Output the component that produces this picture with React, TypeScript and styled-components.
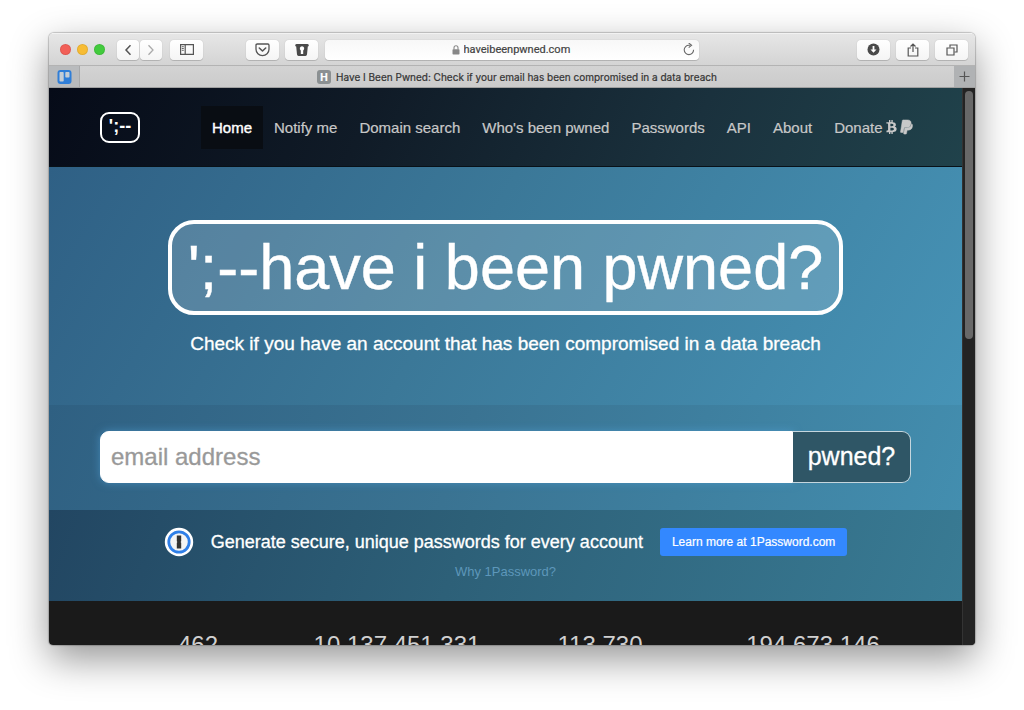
import React from 'react';
import styled, { createGlobalStyle } from 'styled-components';
import { FaBtc, FaPaypal } from 'react-icons/fa';

const sans = `"Liberation Sans", Arial, sans-serif`;

const GlobalStyle = createGlobalStyle`
  *, *::before, *::after { box-sizing: border-box; }
  body { margin: 0; background: #fff; font-family: ${sans}; }
  button, input { font: inherit; margin: 0; }
  a { text-decoration: none; color: inherit; }
`;

const Desktop = styled.div`
  display: flex;
  flex-direction: column;
  height: 100vh;
  padding: 33px 49px 65px;
  overflow: hidden;
`;

const BrowserWindow = styled.div`
  flex: 1;
  min-height: 0;
  display: flex;
  flex-direction: column;
  overflow: hidden;
  border-radius: 5px 5px 4px 4px;
  box-shadow: 0 0 1px 1px rgba(0, 0, 0, 0.2), 0 14px 38px rgba(0, 0, 0, 0.42);
`;

const Toolbar = styled.div`
  display: grid;
  grid-template-columns: 1fr 374px 1fr;
  align-items: center;
  height: 33px;
  flex: none;
  background: linear-gradient(#e6e6e6, #d4d4d4);
  border-top: 1px solid #f2f2f2;
  border-bottom: 1px solid #b3b3b3;
`;

const ToolGroup = styled.div<{ $end?: boolean }>`
  display: flex;
  align-items: center;
  gap: 6px;
  padding: 0 7px;
  justify-content: ${(p) => (p.$end ? 'flex-end' : 'flex-start')};
`;

const Lights = styled.div`
  display: flex;
  gap: 6px;
  margin: 0 6px 0 4px;
`;

const Light = styled.button<{ $color: string }>`
  width: 11px;
  height: 11px;
  padding: 0;
  border: 1px solid rgba(0, 0, 0, 0.08);
  border-radius: 50%;
  background: ${(p) => p.$color};
`;

const NavPair = styled.div`
  display: flex;
  gap: 1px;
  margin-right: 2px;
`;

const ToolButton = styled.button<{ $narrow?: boolean }>`
  display: flex;
  align-items: center;
  justify-content: center;
  width: ${(p) => (p.$narrow ? 22 : 33)}px;
  height: 20px;
  padding: 0;
  border: 0;
  border-radius: 4px;
  background: linear-gradient(#fff, #f5f5f5);
  box-shadow: 0 0 1px rgba(0, 0, 0, 0.25), 0 1px 0 rgba(0, 0, 0, 0.14);
`;

const Spacer = styled.div`
  flex: 1;
`;

const AddressBar = styled.form`
  display: flex;
  align-items: center;
  justify-content: center;
  gap: 3px;
  height: 20px;
  padding: 0 2px 0 18px;
  border-radius: 4px;
  background: linear-gradient(#f8f8f8, #fff);
  box-shadow: 0 0 1px rgba(0, 0, 0, 0.25), 0 1px 0 rgba(0, 0, 0, 0.14);
`;

const AddressCenter = styled.div`
  flex: 1;
  display: flex;
  align-items: center;
  justify-content: center;
  gap: 4px;
`;

const AddressInput = styled.input`
  width: 108px;
  padding: 0;
  border: 0;
  outline: 0;
  background: none;
  color: #444;
  font-family: Roboto, sans-serif;
  font-size: 11px;
  line-height: 16px;
  -webkit-text-stroke: 0.2px #444;
`;

const Reload = styled.button`
  display: flex;
  width: 14px;
  padding: 0;
  border: 0;
  background: none;
`;

const TabBar = styled.div`
  display: flex;
  flex: none;
  height: 22px;
  background: #b9bbbd;
  border-bottom: 1px solid #a0a0a0;
`;

const PinnedTab = styled.button`
  display: flex;
  align-items: center;
  justify-content: center;
  width: 31px;
  padding: 0;
  border: 0;
  border-right: 1px solid #a8a9aa;
  background: #b9bbbd;
`;

const ActiveTab = styled.div`
  flex: 1;
  display: flex;
  align-items: center;
  justify-content: center;
  gap: 5px;
  background: linear-gradient(#d3d3d3, #cbcbcb);
  color: #333;
  font-family: Inter, sans-serif;
  font-size: 10px;
  white-space: nowrap;
  -webkit-text-stroke: 0.2px;
`;

const Favicon = styled.span`
  display: flex;
  align-items: center;
  justify-content: center;
  width: 14px;
  height: 14px;
  border-radius: 3px;
  background: #8b9092;
  color: #fff;
  font-weight: 700;
`;

const NewTab = styled.button`
  display: flex;
  align-items: center;
  justify-content: center;
  width: 21px;
  padding: 0;
  border: 0;
  background: #b0b2b4;
`;

const Viewport = styled.div`
  flex: 1;
  min-height: 0;
  display: flex;
  background: #1a1a1a;
`;

const Page = styled.div`
  flex: 1;
  min-width: 0;
  overflow: hidden;
`;

const ScrollTrack = styled.div`
  width: 13px;
  padding: 3px 2px 3px 2px;
  background: #232323;
  border-left: 1px solid #333;
`;

const ScrollThumb = styled.div`
  width: 8px;
  height: 45%;
  border-radius: 4px;
  background: #686868;
`;

const SiteHeader = styled.header`
  display: flex;
  align-items: center;
  height: 79px;
  padding: 0 39px 0 51px;
  background: linear-gradient(115deg, #060b18, #101b27 35%, #1a313d 70%, #20424b);
  border-bottom: 1px solid #081118;
`;

const Brand = styled.a`
  display: flex;
  flex: none;
  justify-content: center;
  width: 40px;
  height: 31px;
  margin-right: 61px;
  border: 2px solid #fff;
  border-radius: 9px;
  color: #fff;
  font-size: 18px;
  font-weight: bold;
  line-height: 24px;
`;

const Nav = styled.nav`
  flex: 1;
  display: flex;
  justify-content: space-between;
`;

const NavLink = styled.a<{ $active?: boolean }>`
  display: flex;
  align-items: center;
  gap: 3px;
  height: 43px;
  padding: 0 11px;
  background: ${(p) => (p.$active ? '#090d13' : 'transparent')};
  color: ${(p) => (p.$active ? '#fff' : '#c8c8c8')};
  -webkit-text-stroke: ${(p) => (p.$active ? '0.4px #fff' : '0.2px #c8c8c8')};
  font-size: 15px;
  white-space: nowrap;
`;

const BitcoinIcon = styled(FaBtc)`
  width: 11px;
  height: 14px;
`;

const PaypalIcon = styled(FaPaypal)`
  width: 13px;
  height: 16px;
  stroke: currentColor;
  stroke-width: 16px;
`;

const Hero = styled.section`
  display: flex;
  flex-direction: column;
  align-items: center;
  padding: 53px 51px 49px;
  background: linear-gradient(120deg, #2f6085, #3b7898 45%, #4693b6);
  color: #fff;
`;

const HeroTitle = styled.h1`
  margin: 0 0 17px;
  padding: 0 16px;
  border: 4px solid #fff;
  border-radius: 26px;
  background: rgba(255, 255, 255, 0.17);
  font-size: 63px;
  font-weight: normal;
  line-height: 87px;
  white-space: nowrap;
  -webkit-text-stroke: 0.4px #fff;
`;

const HeroLead = styled.p`
  margin: 0;
  font-size: 19px;
  line-height: 24px;
  -webkit-text-stroke: 0.3px #fff;
`;

const SearchBand = styled.section`
  padding: 26px 51px 27px;
  background: linear-gradient(110deg, #2f6082, #3a7392 45%, #438eaf);
`;

const SearchForm = styled.form`
  display: flex;
  height: 52px;
`;

const EmailInput = styled.input`
  flex: 1;
  min-width: 0;
  padding: 0 10px;
  border: 1px solid #fff;
  border-radius: 9px 0 0 9px;
  outline: 0;
  background: #fff;
  box-shadow: 0 0 8px rgba(82, 160, 215, 0.6);
  font-size: 24px;

  &::placeholder {
    color: #999;
    opacity: 1;
    -webkit-text-stroke: 0.3px #999;
  }
`;

const PwnedButton = styled.button`
  width: 118px;
  padding: 0 0 2px;
  border: 1px solid #c5d6de;
  border-left: 0;
  border-radius: 0 9px 9px 0;
  background: #2f5666;
  color: #fff;
  font-size: 25px;
  -webkit-text-stroke: 0.3px #fff;
`;

const PromoBand = styled.section`
  display: flex;
  flex-direction: column;
  align-items: center;
  height: 91px;
  padding-top: 17px;
  background: linear-gradient(110deg, #224662, #2d6078 45%, #397b94);
`;

const PromoRow = styled.div`
  display: flex;
  align-items: center;
  margin-bottom: 7px;
  color: #fff;
  line-height: 30px;
  white-space: nowrap;
`;

const PromoText = styled.span`
  margin: 0 17px;
  font-size: 18px;
  -webkit-text-stroke: 0.3px #fff;
`;

const PromoButton = styled.a`
  padding: 0 12px;
  border-radius: 3px;
  background: #3388ff;
  font-size: 12px;
  line-height: 28px;
  -webkit-text-stroke: 0.2px #fff;
`;

const WhyLink = styled.a`
  color: #5d97ba;
  font-size: 13px;
  line-height: 16px;
`;

const Stats = styled.section`
  display: grid;
  grid-template-columns: 196fr 202fr 204fr 222fr;
  padding: 28px 38px 30px 51px;
  color: #d0d0d0;
  font-size: 24px;
  line-height: 32px;
  text-align: center;
`;

const stroke = { fill: 'none', stroke: '#555', strokeWidth: 1.2 } as const;

const links = ['Home', 'Notify me', 'Domain search', "Who's been pwned", 'Passwords', 'API', 'About'];
const stats = ['462', '10,137,451,331', '113,730', '194,673,146'];

export default function App() {
  return (
    <>
      <GlobalStyle />
      <Desktop>
        <BrowserWindow>
          <Toolbar>
            <ToolGroup>
              <Lights>
                <Light $color="#f25f57" aria-label="Close" />
                <Light $color="#f7bc34" aria-label="Minimize" />
                <Light $color="#42cb3d" aria-label="Zoom" />
              </Lights>
              <NavPair>
                <ToolButton $narrow aria-label="Back">
                  <svg width="8" height="12" viewBox="0 0 8 12"><path d="M6.500 1.200 2 6l4.500 4.800" {...stroke} strokeWidth="1.500" /></svg>
                </ToolButton>
                <ToolButton $narrow aria-label="Forward">
                  <svg width="8" height="12" viewBox="0 0 8 12"><path d="M1.500 1.200 6 6l-4.500 4.800" {...stroke} stroke="#aaa" strokeWidth="1.300" /></svg>
                </ToolButton>
              </NavPair>
              <ToolButton aria-label="Sidebar">
                <svg width="14" height="11" viewBox="0 0 14 11">
                  <path d="M.6.6h12.800v9.800H.6zM5.200.6v9.800" {...stroke} />
                  <path d="M1.800 2.700h2M1.800 4.500h2M1.800 6.300h2" {...stroke} strokeWidth="0.900" />
                </svg>
              </ToolButton>
              <Spacer />
              <ToolButton aria-label="Save to Pocket">
                <svg width="15" height="14" viewBox="0 0 15 14">
                  <path d="M2.200 1h10.600q1.200 0 1.200 1.200v4a6.500 6.500 0 0 1-13 0v-4Q1 1 2.200 1z" {...stroke} strokeWidth="1.300" />
                  <path d="m4.300 5 3.200 3 3.200-3" {...stroke} strokeWidth="1.600" strokeLinecap="round" strokeLinejoin="round" />
                </svg>
              </ToolButton>
              <ToolButton aria-label="Password manager">
                <svg width="14" height="12" viewBox="0 0 14 12">
                  <path d="M1.500 0h11Q14 0 13.800 1.500q-.1.900-1 1.100L12 10.600q-.2 1.400-1.500 1.400h-7Q2.200 12 2 10.600L1.200 2.600q-.9-.2-1-1.100Q0 0 1.500 0z" fill="#4a4a4a" />
                  <path d="M7 2.200a2.300 2.300 0 0 1 1.200 4.200V10H5.800V6.400A2.300 2.300 0 0 1 7 2.200z" fill="#fff" />
                </svg>
              </ToolButton>
            </ToolGroup>
            <AddressBar>
              <AddressCenter>
                <svg width="8" height="10" viewBox="0 0 8 10">
                  <rect x="0.500" y="4.200" width="7" height="5.300" rx="0.800" fill="#888" />
                  <path d="M2 4.500V2.800a2 2 0 0 1 4 0v1.700" fill="none" stroke="#888" strokeWidth="1.100" />
                </svg>
                <AddressInput aria-label="Address" defaultValue="haveibeenpwned.com" />
              </AddressCenter>
              <Reload type="button" aria-label="Reload">
                <svg width="12" height="13" viewBox="0 0 12 13">
                  <path d="M10.600 6.800A4.700 4.700 0 1 1 6 2.200h1.200" fill="none" stroke="#6a6a6a" strokeWidth="1.100" />
                  <path d="M5.700 0 8.600 2.300 5.700 4.600" fill="none" stroke="#6a6a6a" strokeWidth="1.100" />
                </svg>
              </Reload>
            </AddressBar>
            <ToolGroup $end>
              <ToolButton aria-label="Downloads">
                <svg width="13" height="13" viewBox="0 0 13 13">
                  <circle cx="6.500" cy="6.500" r="6" fill="#4a4a4a" />
                  <path d="M5.600 3h1.800v3.400h2.100l-3 3.300-3-3.300h2.100z" fill="#fff" />
                </svg>
              </ToolButton>
              <ToolButton aria-label="Share">
                <svg width="12" height="14" viewBox="0 0 12 14">
                  <path d="M4 5H1.200v8h9.600V5H8M6 9V1.200M3.500 3.500 6 1l2.500 2.500" {...stroke} />
                </svg>
              </ToolButton>
              <ToolButton aria-label="Show all tabs">
                <svg width="12" height="12" viewBox="0 0 12 12">
                  <path d="M1 4h7v7H1z" {...stroke} />
                  <path d="M4 3.500V1h7v7H8.500" {...stroke} />
                </svg>
              </ToolButton>
            </ToolGroup>
          </Toolbar>
          <TabBar>
            <PinnedTab aria-label="Trello">
              <svg width="15" height="14" viewBox="0 0 15 14">
                <rect x="0.500" width="14" height="14" rx="3" fill="#2f7ed8" />
                <rect x="2.500" y="2" width="4.200" height="9.500" rx="0.800" fill="#c5cdd5" />
                <rect x="8.300" y="2" width="4.200" height="5.500" rx="0.800" fill="#c5cdd5" />
              </svg>
            </PinnedTab>
            <ActiveTab>
              <Favicon>H</Favicon>
              <span>Have I Been Pwned: Check if your email has been compromised in a data breach</span>
            </ActiveTab>
            <NewTab aria-label="New tab">
              <svg width="11" height="11" viewBox="0 0 11 11"><path d="M5.500 0.500v10M.5 5.500h10" {...stroke} /></svg>
            </NewTab>
          </TabBar>
          <Viewport>
            <Page>
              <SiteHeader>
                <Brand href="#">';--</Brand>
                <Nav>
                  {links.map((label, i) => (
                    <NavLink key={label} href="#" $active={i === 0}>{label}</NavLink>
                  ))}
                  <NavLink href="#">
                    Donate <BitcoinIcon /> <PaypalIcon />
                  </NavLink>
                </Nav>
              </SiteHeader>
              <Hero>
                <HeroTitle>';--have i been pwned?</HeroTitle>
                <HeroLead>Check if you have an account that has been compromised in a data breach</HeroLead>
              </Hero>
              <SearchBand>
                <SearchForm>
                  <EmailInput type="email" aria-label="email address" placeholder="email address" />
                  <PwnedButton type="button">pwned?</PwnedButton>
                </SearchForm>
              </SearchBand>
              <PromoBand>
                <PromoRow>
                  <svg width="30" height="30" viewBox="0 0 30 30">
                    <circle cx="15" cy="15" r="14.200" fill="#fff" />
                    <circle cx="15" cy="15" r="10.200" fill="#f4f4f4" stroke="#2f7fe8" strokeWidth="2.800" />
                    <path d="M12.800 8.500h4.400v5.700l-.6.800.6.800v5.700h-4.400v-5.700l.6-.8-.6-.8z" fill="#333" />
                  </svg>
                  <PromoText>Generate secure, unique passwords for every account</PromoText>
                  <PromoButton href="#">Learn more at 1Password.com</PromoButton>
                </PromoRow>
                <WhyLink href="#">Why 1Password?</WhyLink>
              </PromoBand>
              <Stats>
                {stats.map((value) => (
                  <div key={value}>{value}</div>
                ))}
              </Stats>
            </Page>
            <ScrollTrack>
              <ScrollThumb />
            </ScrollTrack>
          </Viewport>
        </BrowserWindow>
      </Desktop>
    </>
  );
}
